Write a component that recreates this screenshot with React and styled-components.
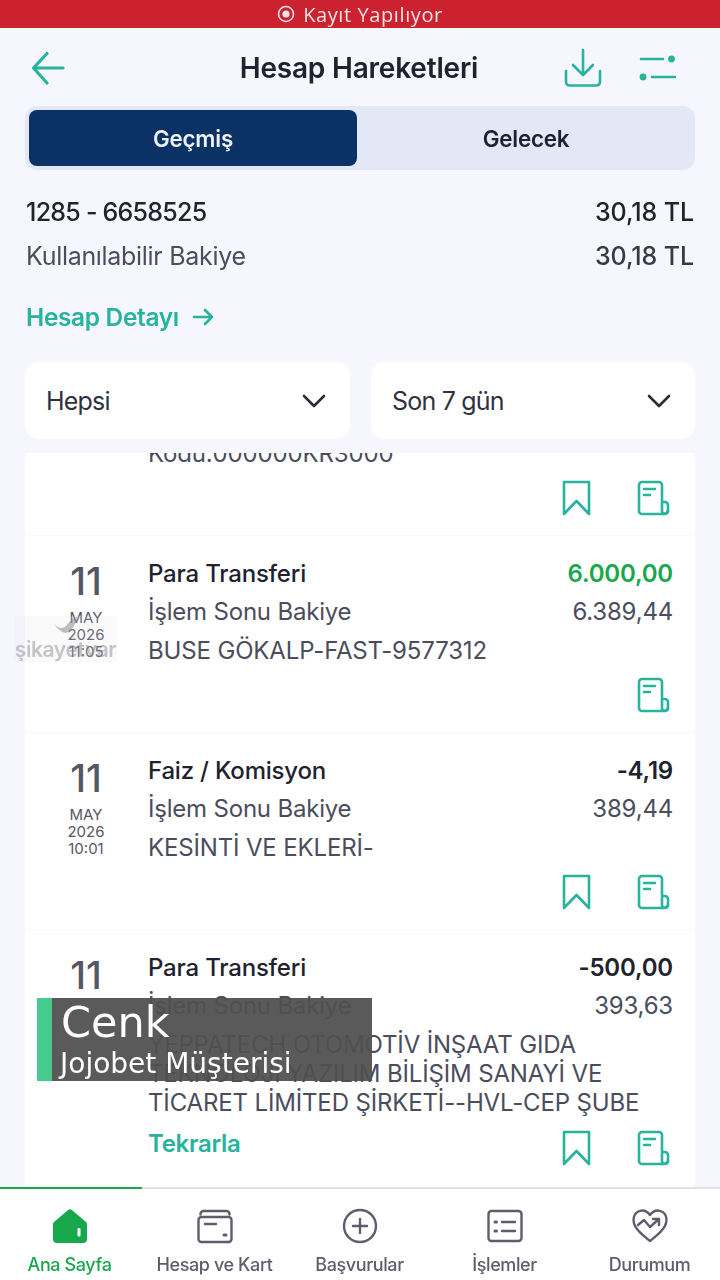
import React from 'react'
import styled, { createGlobalStyle } from 'styled-components'

const TEAL = '#27b39d'
const GREEN = '#18a84c'
const DARK = '#20222e'
const GRAY = '#4b4d5c'
const NAV_GRAY = '#5c5e6c'

const Global = createGlobalStyle`
  html, body { margin: 0; padding: 0; }
  body { background: #f6f6fe; font-family: Inter, "Liberation Sans", sans-serif; }
  * { box-sizing: border-box; }
`

const Page = styled.div`
  position: relative;
  width: 720px;
  height: 1280px;
  overflow: hidden;
  background: #f6f6fe;
  color: ${DARK};
`

const Screen = styled.div`
  height: 100%;
  display: flex;
  flex-direction: column;
  filter: blur(0.35px);
`

const RecordBar = styled.div`
  height: 28px;
  flex: none;
  background: #cc2230;
  color: #f6e4e4;
  display: flex;
  align-items: center;
  justify-content: center;
  gap: 8px;
  font-family: "Open Sans", sans-serif;
  font-size: 20px;
  letter-spacing: 0.6px;
`

const Header = styled.header`
  height: 78px;
  flex: none;
  display: flex;
  align-items: center;
  position: relative;
  padding: 2px 43px 0 30px;
  justify-content: space-between;
`

const Title = styled.h1`
  position: absolute;
  left: 0;
  right: 2px;
  margin: 0;
  text-align: center;
  font-size: 28px;
  font-weight: 600;
  letter-spacing: -0.2px;
  pointer-events: none;
`

const HeaderActions = styled.div`
  display: flex;
  align-items: center;
  gap: 37px;
`

const Tabs = styled.div`
  flex: none;
  margin: 0 25px;
  height: 64px;
  padding: 4px;
  padding-right: 0;
  display: flex;
  background: #e3e7f6;
  border-radius: 12px;
`

const Tab = styled.div`
  flex: ${p => (p.$active ? '0 0 328px' : '1')};
  display: flex;
  align-items: center;
  justify-content: center;
  font-size: 22.4px;
  font-weight: 600;
  letter-spacing: -0.2px;
  border-radius: 8px;
  color: ${p => (p.$active ? '#eef1f8' : DARK)};
  background: ${p => (p.$active ? '#0b3265' : 'transparent')};
`

const Account = styled.section`
  flex: none;
  padding: 20px 26px 0;
`

const AccountRow = styled.div`
  display: flex;
  justify-content: space-between;
  height: 44px;
  align-items: center;
  font-size: 25px;
  letter-spacing: ${p => (p.$strong ? '-0.75px' : '-0.3px')};
  font-weight: ${p => (p.$strong ? 500 : 400)};
  color: ${p => (p.$muted ? GRAY : DARK)};
`

const Amount = styled.span`
  font-weight: 500;
  letter-spacing: -0.1px;
  color: ${p => (p.$muted ? '#383a48' : DARK)};
`

const DetailLink = styled.a`
  display: flex;
  align-items: center;
  gap: 13px;
  margin-top: 19px;
  height: 40px;
  font-size: 24.4px;
  font-weight: 600;
  letter-spacing: -0.3px;
  color: ${TEAL};
`

const Filters = styled.div`
  flex: none;
  display: grid;
  grid-template-columns: 325px 324px;
  gap: 21px;
  margin: 25px 25px 14px;
`

const Select = styled.div`
  height: 77px;
  padding: 0 24px 0 21px;
  display: flex;
  align-items: center;
  justify-content: space-between;
  background: #fff;
  border-radius: 14px;
  font-size: 25px;
  letter-spacing: -0.8px;
  color: #2f3140;
`

const List = styled.div`
  flex: 1;
  min-height: 0;
  margin: 0 25px;
  background: #fff;
  overflow: hidden;
`

const Scroller = styled.div`
  margin-top: -20px;
`

const Row = styled.article`
  display: grid;
  grid-template-columns: 123px 1fr;
  padding: 0 22px 19px 0;
  margin-bottom: 18px;
  border-bottom: 1px solid #fafafc;
`

const DateCol = styled.div`
  display: flex;
  flex-direction: column;
  align-items: center;
  padding-right: 1px;
  color: #555765;
`

const Day = styled.div`
  font-size: 38px;
  font-weight: 500;
  line-height: 44px;
  margin-top: 5px;
  margin-bottom: 6px;
`

const DateLine = styled.div`
  font-size: 15px;
  line-height: 17px;
`

const Body = styled.div`
  min-width: 0;
`

const Line = styled.div`
  display: flex;
  justify-content: space-between;
  height: 38px;
  align-items: center;
  font-size: 24px;
  letter-spacing: -0.2px;
`

const RowTitle = styled.span`
  font-weight: 500;
  color: ${DARK};
`

const Balance = styled.span`
  color: ${GRAY};
`

const Value = styled.span`
  font-weight: 600;
  color: ${p => (p.$positive ? GREEN : DARK)};
`

const Desc = styled.div`
  margin-top: 6px;
  font-size: 24px;
  line-height: 29px;
  letter-spacing: -0.15px;
  color: ${GRAY};
`

const Actions = styled.div`
  display: flex;
  align-items: flex-start;
  justify-content: space-between;
  height: 36px;
  margin-top: ${p => (p.$repeat ? '13px' : '12px')};
`

const Repeat = styled.span`
  font-size: 24px;
  line-height: 28px;
  font-weight: 600;
  letter-spacing: -0.3px;
  color: ${TEAL};
`

const ActionIcons = styled.div`
  margin-left: auto;
  display: flex;
  gap: 45px;
  align-items: center;
  padding-right: 3px;
`

const Nav = styled.nav`
  flex: none;
  height: 93px;
  position: relative;
  display: grid;
  grid-template-columns: 142px repeat(4, 145px);
  background: #fff;
  border-top: 2px solid #e2e2e6;
`

const NavMarker = styled.div`
  position: absolute;
  top: -2px;
  left: 0;
  width: 142px;
  height: 2px;
  background: ${GREEN};
`

const NavItem = styled.div`
  display: flex;
  flex-direction: column;
  align-items: center;
  white-space: nowrap;
  color: ${p => (p.$active ? GREEN : NAV_GRAY)};
  font-size: 18px;
  font-weight: 500;
  letter-spacing: -0.4px;
  padding: 19px ${p => (p.$active ? '3px' : '0')} 0 0;
`

const NavIcon = styled.div`
  height: 36px;
  display: flex;
  align-items: center;
  margin-bottom: 10px;
`

const Watermark = styled.div`
  position: absolute;
  left: 14px;
  top: 616px;
  width: 103px;
  height: 46px;
  display: flex;
  flex-direction: column;
  align-items: center;
  justify-content: flex-end;
  background: rgba(225, 225, 230, 0.16);
  color: rgba(130, 130, 135, 0.45);
  font-size: 21px;
  font-weight: 600;
  line-height: 25px;
  letter-spacing: -0.4px;
`

const WatermarkIcon = styled.svg`
  position: absolute;
  left: 39px;
  top: 0;
`

const LowerThird = styled.div`
  position: absolute;
  left: 37px;
  top: 998px;
  width: 335px;
  height: 83px;
  border-left: 15px solid #46cb8e;
  background: rgba(80, 80, 80, 0.94);
  color: #fff;
  font-family: "DejaVu Sans", sans-serif;
`

const LowerName = styled.div`
  font-size: 43px;
  line-height: 46px;
  margin-left: 9px;
  margin-top: 1px;
`

const LowerRole = styled.div`
  font-size: 28px;
  line-height: 30px;
  margin-left: 8px;
  margin-top: 4px;
  white-space: nowrap;
`

const RecordIcon = () => (
  <svg width="18" height="18" viewBox="0 0 18 18">
    <circle cx="9" cy="9" r="7.5" fill="none" stroke="#f6e4e4" strokeWidth="1.6" />
    <circle cx="9" cy="9" r="3.6" fill="#f6e4e4" />
  </svg>
)

const BackIcon = () => (
  <svg width="36" height="36" viewBox="0 0 36 36" fill="none" stroke={TEAL} strokeWidth="3.2" strokeLinecap="round" strokeLinejoin="round">
    <path d="M33 18H3.500M17 3.500 3.500 18 17 33" />
  </svg>
)

const DownloadIcon = () => (
  <svg width="38" height="40" viewBox="0 0 38 40" fill="none" stroke={TEAL} strokeWidth="2.6" strokeLinecap="round" strokeLinejoin="round">
    <path d="M19 2v25M9 17l10 10 10-10" />
    <path d="M2 23v11a3.5 3.5 0 0 0 3.5 3.5h27a3.5 3.5 0 0 0 3.5-3.5V23" />
  </svg>
)

const FilterIcon = () => (
  <svg width="38" height="28" viewBox="0 0 38 28" fill="none" stroke={TEAL} strokeWidth="2.6" strokeLinecap="round">
    <path d="M2 5h22M13 23h23" />
    <circle cx="32.5" cy="5" r="3.4" fill={TEAL} stroke="none" />
    <circle cx="4" cy="23" r="3.4" fill={TEAL} stroke="none" />
  </svg>
)

const ArrowRight = () => (
  <svg width="22" height="18" viewBox="0 0 22 18" fill="none" stroke={TEAL} strokeWidth="2.6" strokeLinecap="round" strokeLinejoin="round">
    <path d="M2 9h18M13 2l7 7-7 7" />
  </svg>
)

const Chevron = () => (
  <svg width="24" height="14" viewBox="0 0 24 14" fill="none" stroke="#2a2c38" strokeWidth="2.6" strokeLinecap="round" strokeLinejoin="round">
    <path d="M2 2l10 10L22 2" />
  </svg>
)

const BookmarkIcon = () => (
  <svg width="30" height="36" viewBox="0 0 30 36" fill="none" stroke={TEAL} strokeWidth="2.6" strokeLinejoin="round">
    <path d="M2 2h25v32L14.500 21 2 34z" />
  </svg>
)

const ReceiptIcon = () => (
  <svg width="33" height="36" viewBox="0 0 33 36" fill="none" stroke={TEAL} strokeWidth="2.6" strokeLinecap="round" strokeLinejoin="round">
    <path d="M25 34H5a3 3 0 0 1-3-3V5a3 3 0 0 1 3-3h17a3 3 0 0 1 3 3v26a3 3 0 0 0 6 0v-6a3 3 0 0 0-3-3h-3" />
    <path d="M25 34h1a5 5 0 0 0 5-3" />
    <path d="M7 9h11M7 15h6" />
  </svg>
)

const HomeIcon = () => (
  <svg width="36" height="36" viewBox="0 0 36 36">
    <path d="M15.800 2.200a3.200 3.200 0 0 1 4.400 0L34 14a3 3 0 0 1 1 2.500V31a4 4 0 0 1-4 4H5a4 4 0 0 1-4-4V16.500A3 3 0 0 1 2 14z" fill={GREEN} />
    <rect x="25.500" y="20" width="3" height="8.500" rx="1" fill="#fff" />
  </svg>
)

const WalletIcon = () => (
  <svg width="36" height="36" viewBox="0 0 36 36" fill="none" stroke={NAV_GRAY} strokeWidth="2.400" strokeLinecap="round" strokeLinejoin="round">
    <path d="M3.500 6.500V6a3 3 0 0 1 3-3h23a3 3 0 0 1 3 3v.5" />
    <rect x="1.500" y="9" width="33" height="25" rx="3" />
    <path d="M8 16h11" />
    <path d="M27 27h2" strokeWidth="3" />
  </svg>
)

const PlusIcon = () => (
  <svg width="36" height="36" viewBox="0 0 36 36" fill="none" stroke={NAV_GRAY} strokeWidth="2.400" strokeLinecap="round">
    <circle cx="18" cy="18" r="16" />
    <path d="M18 11v14M11 18h14" />
  </svg>
)

const ListIcon = () => (
  <svg width="36" height="36" viewBox="0 0 36 36" fill="none" stroke={NAV_GRAY} strokeWidth="2.400" strokeLinecap="round" strokeLinejoin="round">
    <rect x="1.500" y="3" width="33" height="30" rx="3" />
    <path d="M15 14h13M15 23h13" />
    <path d="M8 14h1.500M8 23h1.500" strokeWidth="3" />
  </svg>
)

const HeartIcon = () => (
  <svg width="36" height="36" viewBox="0 0 36 36" fill="none" stroke={NAV_GRAY} strokeWidth="2.400" strokeLinecap="round" strokeLinejoin="round">
    <path d="M18 7C15 3 11 2 8 2.800 3.500 4 1.500 8 1.500 12c0 8 9 15 16.500 21 7.500-6 16.500-13 16.500-21 0-4-2-8-6.500-9.200C25 2 21 3 18 7z" />
    <path d="M6 17l6-5 6 7 9-8M21 11h6v6" />
  </svg>
)

const RowActions = ({ bookmark, repeat }) => (
  <Actions $repeat={repeat}>
    {repeat && <Repeat>Tekrarla</Repeat>}
    <ActionIcons>
      {bookmark && <BookmarkIcon />}
      <ReceiptIcon />
    </ActionIcons>
  </Actions>
)

const Transaction = ({ time, title, amount, positive, balance, desc, bookmark, repeat }) => (
  <Row>
    <DateCol>
      <Day>11</Day>
      {time && (
        <>
          <DateLine>MAY</DateLine>
          <DateLine>2026</DateLine>
          <DateLine>{time}</DateLine>
        </>
      )}
    </DateCol>
    <Body>
      <Line>
        <RowTitle>{title}</RowTitle>
        <Value $positive={positive}>{amount}</Value>
      </Line>
      <Line>
        <Balance>İşlem Sonu Bakiye</Balance>
        <Balance>{balance}</Balance>
      </Line>
      <Desc>{desc}</Desc>
      <RowActions bookmark={bookmark} repeat={repeat} />
    </Body>
  </Row>
)

const navItems = [
  { label: 'Ana Sayfa', icon: <HomeIcon />, active: true },
  { label: 'Hesap ve Kart', icon: <WalletIcon /> },
  { label: 'Başvurular', icon: <PlusIcon /> },
  { label: 'İşlemler', icon: <ListIcon /> },
  { label: 'Durumum', icon: <HeartIcon /> },
]

const App = () => (
  <Page>
    <Global />
    <Screen>
      <RecordBar>
        <RecordIcon />
        Kayıt Yapılıyor
      </RecordBar>
      <Header>
        <BackIcon />
        <Title>Hesap Hareketleri</Title>
        <HeaderActions>
          <DownloadIcon />
          <FilterIcon />
        </HeaderActions>
      </Header>
      <Tabs>
        <Tab $active>Geçmiş</Tab>
        <Tab>Gelecek</Tab>
      </Tabs>
      <Account>
        <AccountRow $strong>
          1285 - 6658525
          <Amount>30,18 TL</Amount>
        </AccountRow>
        <AccountRow $muted>
          Kullanılabilir Bakiye
          <Amount $muted>30,18 TL</Amount>
        </AccountRow>
        <DetailLink>
          Hesap Detayı
          <ArrowRight />
        </DetailLink>
      </Account>
      <Filters>
        <Select>
          Hepsi
          <Chevron />
        </Select>
        <Select>
          Son 7 gün
          <Chevron />
        </Select>
      </Filters>
      <List>
        <Scroller>
          <Row>
            <div />
            <Body>
              <Desc>Kodu:000000KR3000</Desc>
              <RowActions bookmark />
            </Body>
          </Row>
          <Transaction
            time="11:05"
            title="Para Transferi"
            amount="6.000,00"
            positive
            balance="6.389,44"
            desc="BUSE GÖKALP-FAST-9577312"
          />
          <Transaction
            time="10:01"
            title="Faiz / Komisyon"
            amount="-4,19"
            balance="389,44"
            desc="KESİNTİ VE EKLERİ-"
            bookmark
          />
          <Transaction
            title="Para Transferi"
            amount="-500,00"
            balance="393,63"
            desc={
              <>
                YEPPATECH OTOMOTİV İNŞAAT GIDA
                <br />
                TEKNOLOJİ YAZILIM BİLİŞİM SANAYİ VE
                <br />
                TİCARET LİMİTED ŞİRKETİ--HVL-CEP ŞUBE
              </>
            }
            bookmark
            repeat
          />
        </Scroller>
      </List>
      <Nav>
        <NavMarker />
        {navItems.map(item => (
          <NavItem key={item.label} $active={item.active}>
            <NavIcon>{item.icon}</NavIcon>
            {item.label}
          </NavItem>
        ))}
      </Nav>
      <Watermark>
        <WatermarkIcon width="26" height="22" viewBox="0 0 26 22">
          <path d="M1 8c5 5 9 5 13 1 2-3 5-7 10-8-1 5-2 9-6 13-3 4-9 5-17-6z" fill="rgba(130,130,135,0.5)" />
        </WatermarkIcon>
        şikayetvar
      </Watermark>
    </Screen>
    <LowerThird>
      <LowerName>Cenk</LowerName>
      <LowerRole>Jojobet Müşterisi</LowerRole>
    </LowerThird>
  </Page>
)

export default App
